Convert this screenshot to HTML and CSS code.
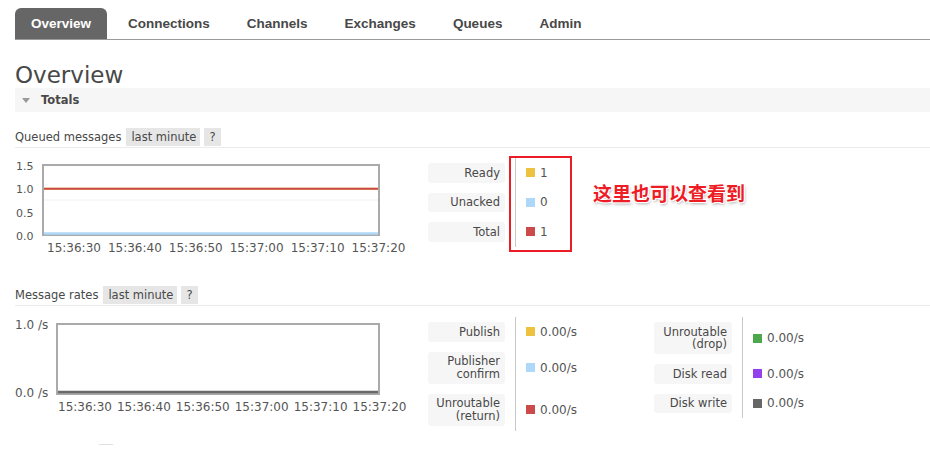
FILE: index.html
```html
<!DOCTYPE html>
<html lang="en">
<head>
<meta charset="utf-8">
<title>RabbitMQ Overview</title>
<link rel="stylesheet" href="styles.css">
</head>
<body>
<div class="page">
  <nav class="tabs">
    <a class="tab active">Overview</a>
    <a class="tab">Connections</a>
    <a class="tab">Channels</a>
    <a class="tab">Exchanges</a>
    <a class="tab">Queues</a>
    <a class="tab">Admin</a>
  </nav>

  <h1 class="title">Overview</h1>

  <div class="section-bar"><span class="tri"></span><span class="section-name">Totals</span></div>

  <div class="sub-head">
    <span class="sub-title">Queued messages</span>
    <span class="pill">last minute</span>
    <span class="pill q">?</span>
  </div>

  <div class="chart-row">
    <div class="chart c1">
      <div class="plot-row">
        <div class="y-axis"><span>1.5</span><span>1.0</span><span>0.5</span><span>0.0</span></div>
        <div class="plot">
          <svg viewBox="0 0 334 68" preserveAspectRatio="none">
            <line x1="0" y1="34" x2="334" y2="34" stroke="#f0f0f0" stroke-width="1"/>
            <line x1="0" y1="22.7" x2="334" y2="22.7" stroke="#edc240" stroke-width="2"/>
            <line x1="0" y1="22.7" x2="334" y2="22.7" stroke="#cb4b4b" stroke-width="2"/>
            <line x1="0" y1="67.5" x2="334" y2="67.5" stroke="#afd8f8" stroke-width="2.5"/>
          </svg>
        </div>
      </div>
      <div class="x-axis"><span>15:36:30</span><span>15:36:40</span><span>15:36:50</span><span>15:37:00</span><span>15:37:10</span><span>15:37:20</span></div>
    </div>

    <div class="legend l1">
      <div class="sep"></div>
      <div class="lbl">Ready</div><div class="val"><i class="sw yellow"></i>1</div>
      <div class="lbl">Unacked</div><div class="val"><i class="sw blue"></i>0</div>
      <div class="lbl">Total</div><div class="val"><i class="sw red"></i>1</div>
      <div class="annot-box"></div>
      <div class="annot-text">这里也可以查看到</div>
    </div>
  </div>

  <div class="sub-head second">
    <span class="sub-title">Message rates</span>
    <span class="pill">last minute</span>
    <span class="pill q">?</span>
  </div>

  <div class="chart-row second">
    <div class="chart c2">
      <div class="plot-row">
        <div class="y-axis"><span>1.0 /s</span><span>0.0 /s</span></div>
        <div class="plot">
          <svg viewBox="0 0 320 68" preserveAspectRatio="none">
            <line x1="0" y1="67" x2="320" y2="67" stroke="#6a6a6a" stroke-width="2.5"/>
          </svg>
        </div>
      </div>
      <div class="x-axis"><span>15:36:30</span><span>15:36:40</span><span>15:36:50</span><span>15:37:00</span><span>15:37:10</span><span>15:37:20</span></div>
    </div>

    <div class="legend l2">
      <div class="sep"></div>
      <div class="lbl">Publish</div><div class="val"><i class="sw yellow"></i>0.00/s</div>
      <div class="lbl">Publisher<br>confirm</div><div class="val"><i class="sw blue"></i>0.00/s</div>
      <div class="lbl">Unroutable<br>(return)</div><div class="val"><i class="sw red"></i>0.00/s</div>
    </div>

    <div class="legend l3">
      <div class="sep"></div>
      <div class="lbl">Unroutable<br>(drop)</div><div class="val"><i class="sw green"></i>0.00/s</div>
      <div class="lbl">Disk read</div><div class="val"><i class="sw purple"></i>0.00/s</div>
      <div class="lbl">Disk write</div><div class="val"><i class="sw gray"></i>0.00/s</div>
    </div>
  </div>

  <div class="stub"></div>
</div>
</body>
</html>
```

FILE: styles.css
```css
html, body {
  margin: 0;
  padding: 0;
  background: #fff;
}

body {
  font-family: "DejaVu Sans", Verdana, sans-serif;
  color: #484848;
}

.page {
  padding: 8px 0 0 15px;
}

/* Tabs */
.tabs {
  display: flex;
  height: 31px;
  border-bottom: 1px solid #9a9a9a;
}

.tab {
  display: flex;
  align-items: center;
  padding: 0 16px;
  margin-right: 5px;
  font-family: "Liberation Sans", Arial, sans-serif;
  font-weight: bold;
  font-size: 13.5px;
  color: #484848;
  border-radius: 6px 6px 0 0;
}

.tab.active {
  background: #666;
  color: #fff;
}

/* Title */
.title {
  margin: 23px 0 0;
  font-weight: normal;
  font-size: 23px;
  line-height: 25px;
  color: #484848;
}

.section-bar {
  display: flex;
  align-items: center;
  height: 24px;
  padding-left: 7px;
  background: #f6f6f6;
}

.tri {
  width: 0;
  height: 0;
  border-left: 4px solid transparent;
  border-right: 4px solid transparent;
  border-top: 5px solid #999;
  margin-right: 11px;
}

.section-name {
  font-weight: bold;
  font-size: 11.5px;
  color: #484848;
}

/* Sub headers */
.sub-head {
  display: flex;
  align-items: center;
  height: 18px;
  margin-top: 16px;
  padding-bottom: 1px;
  border-bottom: 1px solid #ebebeb;
  font-size: 11.5px;
}

.sub-head.second {
  margin-top: 32px;
}

.sub-title {
  color: #484848;
}

.pill {
  height: 18px;
  line-height: 18px;
  padding: 0 4px 0 5px;
  margin-left: 5px;
  background: #e6e6e6;
  color: #484848;
}

.pill.q {
  margin-left: 4px;
  padding: 0 5px;
}

/* Chart rows */
.chart-row {
  display: flex;
  align-items: flex-start;
  margin-top: 10px;
}

.chart-row.second {
  margin-top: 11px;
}

.chart {
  flex-shrink: 0;
  width: 413px;
  padding-top: 6px;
}

.plot-row {
  display: flex;
  align-items: flex-start;
  height: 72px;
}

.y-axis {
  display: flex;
  flex-direction: column;
  justify-content: space-between;
  margin-top: -4px;
  line-height: 12px;
  color: #555;
}

.c1 .y-axis {
  width: 27px;
  height: 82px;
  margin-top: -3px;
  font-size: 11px;
  padding-left: 1px;
  box-sizing: border-box;
}

.c2 .y-axis {
  width: 41px;
  height: 80px;
  font-size: 12px;
}

.plot {
  height: 72px;
  border: 2px solid #aaa;
  box-sizing: border-box;
  background: #fff;
}

.c1 .plot { width: 338px; }
.c2 .plot { width: 324px; }

.plot svg {
  display: block;
  width: 100%;
  height: 100%;
  overflow: visible;
}

.x-axis {
  display: flex;
  margin-top: 6px;
  font-size: 12px;
  line-height: 12px;
  color: #555;
  white-space: nowrap;
}

.c1 .x-axis { gap: 7px; margin-left: 32px; }
.c2 .x-axis { gap: 5px; margin-left: 43px; }

/* Legends */
.legend {
  position: relative;
  display: grid;
  grid-template-rows: repeat(3, auto);
  row-gap: 10px;
  padding: 5px 0;
  font-size: 11.5px;
}

.l1, .l2 {
  grid-template-columns: 77px 10px 1px 138px;
}

.l3 {
  grid-template-columns: 78px 10px 1px auto;
}

.sep {
  grid-column: 3;
  grid-row: 1 / -1;
  margin: -5px 0;
  background: #c8c8c8;
}

.lbl {
  grid-column: 1;
  padding: 3.5px 5px;
  line-height: 12.5px;
  text-align: right;
  background: #f6f6f6;
  border-radius: 3px;
  color: #484848;
}

.val {
  grid-column: 4;
  display: flex;
  align-items: center;
  gap: 5px;
  padding-left: 10px;
  font-size: 12px;
  color: #555;
}

.sw {
  display: block;
  width: 9px;
  height: 9px;
}

.sw.yellow { background: #edc240; }
.sw.blue { background: #afd8f8; }
.sw.red { background: #cb4b4b; }
.sw.green { background: #4da74d; }
.sw.purple { background: #9440ed; }
.sw.gray { background: #666; }

/* Annotation overlay */
.annot-box {
  position: absolute;
  left: 81px;
  top: -2px;
  width: 63px;
  height: 96px;
  border: 2px solid #ea1d25;
  box-sizing: border-box;
}

.annot-text {
  position: absolute;
  left: 165px;
  top: 23px;
  white-space: nowrap;
  font-family: "Noto Sans CJK SC", sans-serif;
  font-weight: bold;
  font-size: 19px;
  line-height: 24px;
  color: #ee1c25;
  text-shadow: -1px -1px 0 #fff, 1px -1px 0 #fff, -1px 1px 0 #fff, 1px 1px 0 #fff, 1px 2px 3px rgba(0, 0, 0, 0.35);
}

.stub {
  width: 14px;
  height: 1px;
  margin: 13px 0 0 84px;
  background: #e0e0e0;
}
```
